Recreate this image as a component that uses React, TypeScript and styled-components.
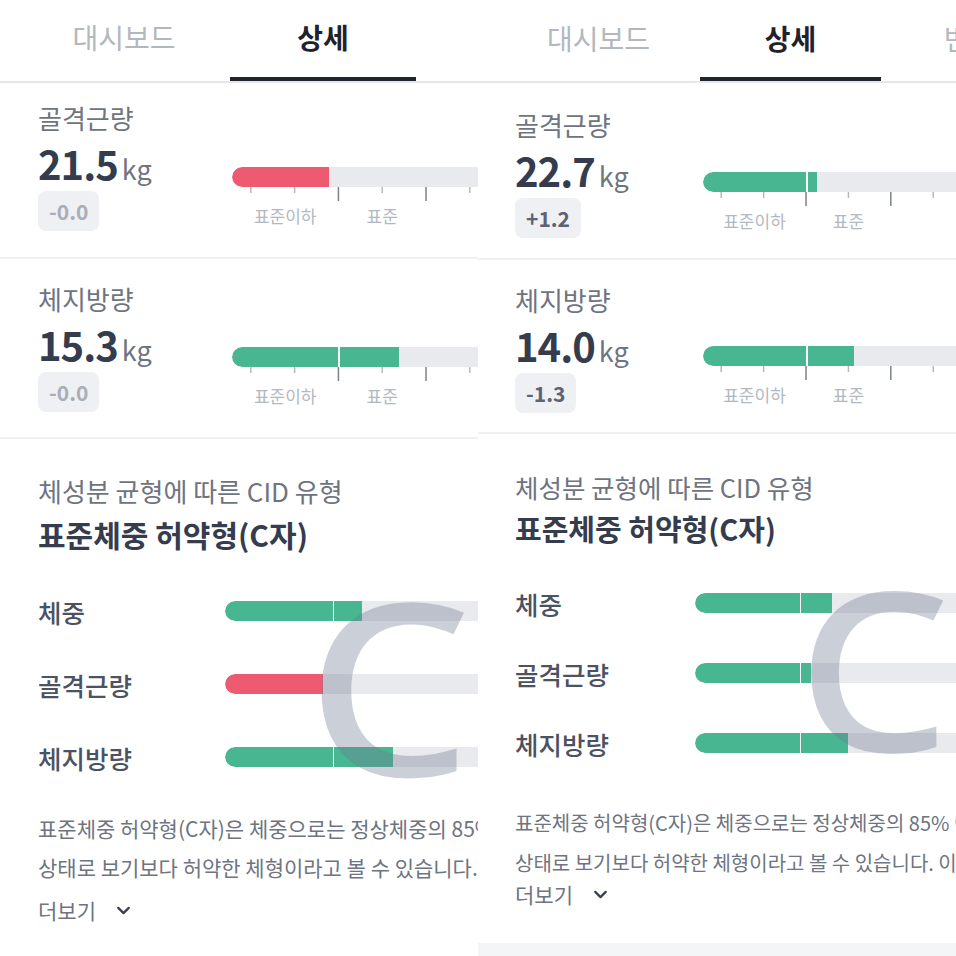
import React from "react";
import styled, { createGlobalStyle, ThemeProvider } from "styled-components";
import { ChevronDown } from "lucide-react";

const GREEN = "#47b691";
const RED = "#ee5a70";
const TRACK = "#e9eaee";

type Metric = {
  label: string;
  value: string;
  diff: string;
  strong: boolean;
  fill: number;
  color: string;
  pt: number;
  h: number;
  barTop: number;
};

type CidRow = { label: string; fill: number; color: string };

type PanelData = {
  padL: number;
  tabPadL: number;
  tabW: number;
  tabGap: number;
  tabShift: number;
  u: number;
  barL: number;
  captionSize: number;
  titleSize: number;
  descSize: number;
  metrics: Metric[];
  cid: {
    pt: number;
    titleMt: number;
    rowsMt: number;
    rowGap: number;
    barL: number;
    divider: number;
    rows: CidRow[];
    descMt: number;
    descLh: number;
    moreMt: number;
    height: number;
    cX: number;
    cY: number;
    cSize: number;
  };
};

const panels: PanelData[] = [
  {
    padL: 38,
    tabPadL: 31,
    tabW: 186,
    tabGap: 13,
    tabShift: 3,
    u: 43.8,
    barL: 232,
    captionSize: 26,
    titleSize: 30,
    descSize: 21,
    metrics: [
      { label: "골격근량", value: "21.5", diff: "-0.0", strong: false, fill: 97, color: RED, pt: 19, h: 176, barTop: 84 },
      { label: "체지방량", value: "15.3", diff: "-0.0", strong: false, fill: 167, color: GREEN, pt: 24, h: 180, barTop: 88 },
    ],
    cid: {
      pt: 36,
      titleMt: 8,
      rowsMt: 38,
      rowGap: 33,
      barL: 225,
      divider: 108,
      rows: [
        { label: "체중", fill: 137, color: GREEN },
        { label: "골격근량", fill: 98, color: RED },
        { label: "체지방량", fill: 168, color: GREEN },
      ],
      descMt: 32,
      descLh: 39,
      moreMt: 8,
      height: 540,
      cX: 306,
      cY: 124,
      cSize: 240,
    },
  },
  {
    padL: 37,
    tabPadL: 30,
    tabW: 181,
    tabGap: 11,
    tabShift: 1,
    u: 42.4,
    barL: 225,
    captionSize: 25.5,
    titleSize: 29,
    descSize: 20,
    metrics: [
      { label: "골격근량", value: "22.7", diff: "+1.2", strong: true, fill: 114, color: GREEN, pt: 26, h: 177, barTop: 89 },
      { label: "체지방량", value: "14.0", diff: "-1.3", strong: true, fill: 151, color: GREEN, pt: 24, h: 174, barTop: 86 },
    ],
    cid: {
      pt: 37,
      titleMt: 6,
      rowsMt: 36,
      rowGap: 30,
      barL: 217,
      divider: 105,
      rows: [
        { label: "체중", fill: 137, color: GREEN },
        { label: "골격근량", fill: 116, color: GREEN },
        { label: "체지방량", fill: 153, color: GREEN },
      ],
      descMt: 40,
      descLh: 40,
      moreMt: -4,
      height: 509,
      cX: 319,
      cY: 121,
      cSize: 222,
    },
  },
];

const Global = createGlobalStyle`
  html, body { margin: 0; padding: 0; background: #ffffff; }
  body {
    font-family: "Noto Sans CJK KR", "Noto Sans", sans-serif;
    -webkit-font-smoothing: antialiased;
  }
  * { box-sizing: border-box; }
`;

const Screen = styled.div`
  display: flex;
  width: 956px;
  height: 956px;
  overflow: hidden;
  background: #ffffff;
`;

const PanelFrame = styled.div`
  flex: none;
  width: 478px;
  height: 956px;
  overflow: hidden;
  background: #f4f5f7;
`;

const Inner = styled.div`
  width: 640px;
  display: flex;
  flex-direction: column;
`;

const TabBar = styled.div`
  display: flex;
  gap: ${(p) => p.theme.tabGap}px;
  padding-left: ${(p) => p.theme.tabPadL}px;
  height: 83px;
  background: #ffffff;
  border-bottom: 2px solid #e6e7ea;
`;

const Tab = styled.div<{ $active?: boolean }>`
  flex: none;
  width: ${(p) => p.theme.tabW}px;
  display: flex;
  align-items: center;
  justify-content: center;
  padding-bottom: ${(p) => p.theme.tabShift}px;
  font-size: 28px;
  font-weight: ${(p) => (p.$active ? 700 : 400)};
  color: ${(p) => (p.$active ? "#1e222b" : "#b3b7be")};
  border-bottom: 4px solid ${(p) => (p.$active ? "#20242e" : "transparent")};
`;

const MetricSection = styled.section<{ $h: number }>`
  display: flex;
  height: ${(p) => p.$h}px;
  padding-left: ${(p) => p.theme.padL}px;
  background: #ffffff;
  border-bottom: 2px solid #eff0f3;
`;

const InfoCol = styled.div<{ $pt: number }>`
  flex: none;
  width: ${(p) => p.theme.barL - p.theme.padL}px;
  padding-top: ${(p) => p.$pt}px;
  display: flex;
  flex-direction: column;
  align-items: flex-start;
`;

const MetricLabel = styled.div`
  font-size: 26px;
  line-height: 32px;
  color: #6e7480;
`;

const ValueRow = styled.div`
  display: flex;
  align-items: baseline;
  gap: 4px;
  margin-top: 7px;
  height: 44px;
`;

const Number = styled.span`
  font-size: 40px;
  line-height: 44px;
  font-weight: 700;
  color: #343c4e;
  letter-spacing: -1px;
`;

const Unit = styled.span`
  font-size: 27px;
  line-height: 44px;
  color: #6e7480;
`;

const Badge = styled.div<{ $strong: boolean }>`
  margin-top: 6px;
  height: 40px;
  padding: 0 11px;
  border-radius: 8px;
  background: #eef0f3;
  display: flex;
  align-items: center;
  font-size: 21px;
  font-weight: 700;
  color: ${(p) => (p.$strong ? "#5b6374" : "#a9aeb8")};
`;

const ScaleCol = styled.div<{ $top: number }>`
  flex: 1;
  padding-top: ${(p) => p.$top}px;
  display: flex;
  flex-direction: column;
`;

const Track = styled.div`
  height: 20px;
  border-radius: 10px 0 0 10px;
  background: ${TRACK};
  display: flex;
  overflow: hidden;
`;

const Fill = styled.div<{ $color: string; $mark: number }>`
  height: 100%;
  border-radius: 10px 0 0 10px;
  background: ${(p) =>
    `linear-gradient(to right, ${p.$color} 0 ${p.$mark}px, rgba(255,255,255,0.85) ${p.$mark}px ${p.$mark + 1.5}px, ${p.$color} ${p.$mark + 1.5}px)`};
`;

const Ticks = styled.svg`
  display: block;
  height: 14px;
  overflow: visible;
`;

const ScaleLabels = styled.div<{ $u: number }>`
  display: grid;
  grid-template-columns: ${(p) => `${2.43 * p.$u}px ${2 * p.$u}px`};
  margin-top: 5px;
  font-size: 17px;
  line-height: 20px;
  color: #b3b8c0;
  text-align: center;
`;

const CidSection = styled.section<{ $pt: number; $h: number }>`
  position: relative;
  height: ${(p) => p.$h}px;
  padding-top: ${(p) => p.$pt}px;
  padding-left: ${(p) => p.theme.padL}px;
  background: #ffffff;
  display: flex;
  flex-direction: column;
  flex: none;
`;

const CidCaption = styled.div`
  font-size: ${(p) => p.theme.captionSize}px;
  line-height: 32px;
  color: #6e7480;
`;

const CidTitle = styled.div<{ $mt: number }>`
  margin-top: ${(p) => p.$mt}px;
  font-size: ${(p) => p.theme.titleSize}px;
  line-height: 38px;
  font-weight: 700;
  color: #343c4e;
`;

const Rows = styled.div<{ $mt: number; $gap: number }>`
  margin-top: ${(p) => p.$mt}px;
  display: flex;
  flex-direction: column;
  gap: ${(p) => p.$gap}px;
`;

const Row = styled.div`
  display: flex;
  align-items: center;
  height: 40px;
`;

const RowLabel = styled.div<{ $w: number }>`
  flex: none;
  width: ${(p) => p.$w}px;
  font-size: 25.5px;
  font-weight: 500;
  color: #4b5261;
`;

const RowTrack = styled(Track)`
  flex: 1;
`;

const BigC = styled.span<{ $x: number; $y: number; $size: number }>`
  position: absolute;
  left: ${(p) => p.$x}px;
  top: ${(p) => p.$y}px;
  font-family: "Noto Sans", sans-serif;
  font-size: ${(p) => p.$size}px;
  line-height: 1;
  font-weight: 500;
  color: rgba(110, 122, 145, 0.36);
  transform: scaleX(1.09);
  transform-origin: left top;
  pointer-events: none;
`;

const Desc = styled.div<{ $mt: number; $lh: number }>`
  margin-top: ${(p) => p.$mt}px;
  font-size: ${(p) => p.theme.descSize}px;
  line-height: ${(p) => p.$lh}px;
  color: #6e7480;
  white-space: nowrap;
`;

const DescLine = styled.div``;

const More = styled.div<{ $mt: number }>`
  margin-top: ${(p) => p.$mt}px;
  display: flex;
  align-items: center;
  gap: 17px;
  height: 30px;
  font-size: 21px;
  color: #6e7480;
  svg {
    color: #3a404c;
  }
`;

function TickMarks({ u }: { u: number }) {
  const w = 8 * u;
  return (
    <Ticks width={w} viewBox={`0 0 ${w} 14`}>
      {Array.from({ length: 8 }).map((_, k) => {
        const x = (0.43 + k) * u;
        const major = k === 2 || k === 4 || k === 6;
        return (
          <line
            key={k}
            x1={x}
            x2={x}
            y1={0}
            y2={major ? 14 : 6}
            stroke={major ? "#7c828d" : "#b4b8c0"}
            strokeWidth={1.5}
          />
        );
      })}
    </Ticks>
  );
}

function Panel({ d }: { d: PanelData }) {
  return (
    <ThemeProvider theme={d}>
      <PanelFrame>
        <Inner>
          <TabBar>
            <Tab>대시보드</Tab>
            <Tab $active>상세</Tab>
            <Tab>변화량</Tab>
          </TabBar>
          {d.metrics.map((m) => (
            <MetricSection key={m.label} $h={m.h}>
              <InfoCol $pt={m.pt}>
                <MetricLabel>{m.label}</MetricLabel>
                <ValueRow>
                  <Number>{m.value}</Number>
                  <Unit>kg</Unit>
                </ValueRow>
                <Badge $strong={m.strong}>{m.diff}</Badge>
              </InfoCol>
              <ScaleCol $top={m.barTop}>
                <Track>
                  <Fill $color={m.color} $mark={2.43 * d.u} style={{ width: m.fill }} />
                </Track>
                <TickMarks u={d.u} />
                <ScaleLabels $u={d.u}>
                  <span>표준이하</span>
                  <span>표준</span>
                </ScaleLabels>
              </ScaleCol>
            </MetricSection>
          ))}
          <CidSection $pt={d.cid.pt} $h={d.cid.height}>
            <CidCaption>체성분 균형에 따른 CID 유형</CidCaption>
            <CidTitle $mt={d.cid.titleMt}>표준체중 허약형(C자)</CidTitle>
            <Rows $mt={d.cid.rowsMt} $gap={d.cid.rowGap}>
              {d.cid.rows.map((r) => (
                <Row key={r.label}>
                  <RowLabel $w={d.cid.barL - d.padL}>{r.label}</RowLabel>
                  <RowTrack>
                    <Fill $color={r.color} $mark={d.cid.divider} style={{ width: r.fill }} />
                  </RowTrack>
                </Row>
              ))}
            </Rows>
            <Desc $mt={d.cid.descMt} $lh={d.cid.descLh}>
              <DescLine>표준체중 허약형(C자)은 체중으로는 정상체중의 85%  이상이라 정상</DescLine>
              <DescLine>상태로 보기보다 허약한 체형이라고 볼 수 있습니다. 이 유형은 근육량을</DescLine>
            </Desc>
            <More $mt={d.cid.moreMt}>
              더보기
              <ChevronDown size={21} strokeWidth={2.6} />
            </More>
            <BigC $x={d.cid.cX} $y={d.cid.cY} $size={d.cid.cSize}>
              C
            </BigC>
          </CidSection>
        </Inner>
      </PanelFrame>
    </ThemeProvider>
  );
}

export default function App() {
  return (
    <>
      <Global />
      <Screen>
        {panels.map((p, i) => (
          <Panel key={i} d={p} />
        ))}
      </Screen>
    </>
  );
}
